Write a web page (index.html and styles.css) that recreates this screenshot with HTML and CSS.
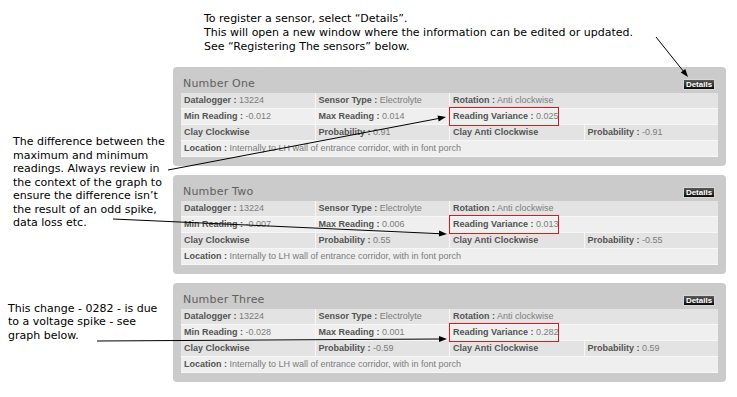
FILE: index.html
```html
<!DOCTYPE html>
<html>
<head>
<meta charset="utf-8">
<link rel="stylesheet" href="styles.css">
</head>
<body>
<div class="page">
  <p class="note-top">To register a sensor, select “Details”.<br>This will open a new window where the information can be edited or updated.<br>See “Registering The sensors” below.</p>
  <div class="main">
    <div class="notes">
      <p class="note note-1">The difference between the<br>maximum and minimum<br>readings. Always review in<br>the context of the graph to<br>ensure the difference isn’t<br>the result of an odd spike,<br>data loss etc.</p>
      <p class="note note-2">This change - 0282 - is due<br>to a voltage spike - see<br>graph below.</p>
    </div>
    <div class="cards">
      <div class="card">
        <div class="card-head"><h2 class="card-title">Number One</h2><span class="btn">Details</span></div>
        <div class="grid">
          <div class="cell row-a"><b>Datalogger :</b> 13224</div>
          <div class="cell row-a"><b>Sensor Type :</b> Electrolyte</div>
          <div class="cell row-a span2"><b>Rotation :</b> Anti clockwise</div>
          <div class="cell row-b"><b>Min Reading :</b> -0.012</div>
          <div class="cell row-b"><b>Max Reading :</b> 0.014</div>
          <div class="cell row-b span2"><span class="hl"></span><b>Reading Variance :</b> 0.025</div>
          <div class="cell row-a"><b>Clay Clockwise</b></div>
          <div class="cell row-a"><b>Probability :</b> 0.91</div>
          <div class="cell row-a"><b>Clay Anti Clockwise</b></div>
          <div class="cell row-a"><b>Probability :</b> -0.91</div>
          <div class="cell row-b span4"><b>Location :</b> Internally to LH wall of entrance corridor, with in font porch</div>
        </div>
      </div>
      <div class="card">
        <div class="card-head"><h2 class="card-title">Number Two</h2><span class="btn">Details</span></div>
        <div class="grid">
          <div class="cell row-a"><b>Datalogger :</b> 13224</div>
          <div class="cell row-a"><b>Sensor Type :</b> Electrolyte</div>
          <div class="cell row-a span2"><b>Rotation :</b> Anti clockwise</div>
          <div class="cell row-b"><b>Min Reading :</b> -0.007</div>
          <div class="cell row-b"><b>Max Reading :</b> 0.006</div>
          <div class="cell row-b span2"><span class="hl"></span><b>Reading Variance :</b> 0.013</div>
          <div class="cell row-a"><b>Clay Clockwise</b></div>
          <div class="cell row-a"><b>Probability :</b> 0.55</div>
          <div class="cell row-a"><b>Clay Anti Clockwise</b></div>
          <div class="cell row-a"><b>Probability :</b> -0.55</div>
          <div class="cell row-b span4"><b>Location :</b> Internally to LH wall of entrance corridor, with in font porch</div>
        </div>
      </div>
      <div class="card">
        <div class="card-head"><h2 class="card-title">Number Three</h2><span class="btn">Details</span></div>
        <div class="grid">
          <div class="cell row-a"><b>Datalogger :</b> 13224</div>
          <div class="cell row-a"><b>Sensor Type :</b> Electrolyte</div>
          <div class="cell row-a span2"><b>Rotation :</b> Anti clockwise</div>
          <div class="cell row-b"><b>Min Reading :</b> -0.028</div>
          <div class="cell row-b"><b>Max Reading :</b> 0.001</div>
          <div class="cell row-b span2"><span class="hl"></span><b>Reading Variance :</b> 0.282</div>
          <div class="cell row-a"><b>Clay Clockwise</b></div>
          <div class="cell row-a"><b>Probability :</b> -0.59</div>
          <div class="cell row-a"><b>Clay Anti Clockwise</b></div>
          <div class="cell row-a"><b>Probability :</b> 0.59</div>
          <div class="cell row-b span4"><b>Location :</b> Internally to LH wall of entrance corridor, with in font porch</div>
        </div>
      </div>
    </div>
  </div>
  <svg class="arrows" width="737" height="397" viewBox="0 0 737 397">
    <g stroke="#000" stroke-width="1" fill="none">
      <line x1="656" y1="37" x2="684" y2="72"/>
      <line x1="168" y1="170" x2="439" y2="118.4"/>
      <line x1="113" y1="219" x2="440" y2="233.7"/>
      <line x1="97" y1="341" x2="440" y2="339"/>
    </g>
    <g fill="#000">
      <polygon points="688,77 680.7,72.6 685.3,68.9"/>
      <polygon points="446,117 438.7,121.4 437.5,115.6"/>
      <polygon points="447,234 438.9,236.6 439.1,230.6"/>
      <polygon points="447,339 439,342 439,336"/>
    </g>
  </svg>
</div>
</body>
</html>
```
FILE: styles.css
```css
html, body {
  margin: 0;
  padding: 0;
  background: #fff;
}
.page {
  position: relative;
  width: 737px;
  height: 397px;
  overflow: hidden;
  font-family: "DejaVu Sans", Verdana, sans-serif;
}
.note-top {
  margin: 0;
  padding: 12px 0 0 204px;
  font-size: 11px;
  line-height: 14px;
  color: #000;
}
.main {
  display: flex;
  margin-top: 13px;
}
.notes {
  width: 173px;
  flex: none;
}
.note {
  margin: 0;
  font-size: 11px;
  line-height: 13.5px;
  color: #000;
  white-space: nowrap;
}
.note-1 {
  margin-top: 68px;
  padding-left: 13px;
}
.note-2 {
  margin-top: 72px;
  padding-left: 8px;
}
.cards {
  width: 553px;
  display: flex;
  flex-direction: column;
  gap: 9px;
}
.card {
  background: #cbcbcb;
  border-radius: 4px;
  padding: 0 8px 9px;
}
.card-head {
  display: flex;
  justify-content: space-between;
  align-items: flex-start;
  height: 26px;
}
.card-title {
  margin: 0;
  padding: 10px 0 0 2px;
  font-size: 11px;
  font-weight: normal;
  line-height: 14px;
  color: #606060;
  letter-spacing: 0.2px;
}
.btn {
  margin: 12px 3px 0 0;
  box-sizing: border-box;
  width: 32px;
  height: 11px;
  border: 1px solid #d8d8d8;
  background: linear-gradient(#5a5a5a, #0a0a0a);
  color: #fff;
  font-family: "Liberation Sans", Arial, sans-serif;
  font-size: 8px;
  font-weight: bold;
  line-height: 9px;
  text-align: center;
}
.grid {
  display: grid;
  grid-template-columns: repeat(4, 1fr);
  grid-auto-rows: 15px;
  gap: 1px;
  padding-bottom: 1px;
  background: #f7f7f7;
  font-family: "Liberation Sans", Arial, sans-serif;
  font-size: 9px;
  line-height: 15px;
  color: #7c7c7c;
}
.cell {
  position: relative;
  padding-left: 3px;
  white-space: nowrap;
}
.cell b {
  color: #535353;
}
.row-a {
  background: #e3e3e3;
}
.row-b {
  background: #efefef;
}
.span2 {
  grid-column: span 2;
}
.span4 {
  grid-column: span 4;
}
.hl {
  position: absolute;
  z-index: 2;
  left: -1px;
  top: -2px;
  width: 110px;
  height: 19px;
  box-sizing: border-box;
  border: 1px solid #e3141c;
}
.arrows {
  position: absolute;
  z-index: 5;
  left: 0;
  top: 0;
  pointer-events: none;
}
```
